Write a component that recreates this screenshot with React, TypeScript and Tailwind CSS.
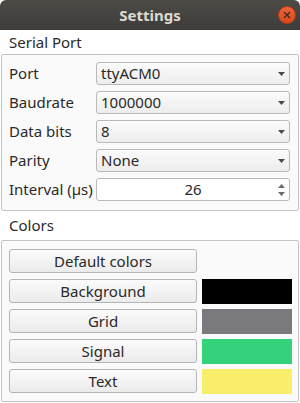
import React from "react";

const rows = [
  { label: "Port", value: "ttyACM0" },
  { label: "Baudrate", value: "1000000" },
  { label: "Data bits", value: "8" },
  { label: "Parity", value: "None" },
];

const colors = [
  { label: "Background", color: "bg-[#000000]" },
  { label: "Grid", color: "bg-[#7a797e]" },
  { label: "Signal", color: "bg-[#34d27a]" },
  { label: "Text", color: "bg-[#f9ee6c]" },
];

const Combo = ({ value }: { value: string }) => (
  <div className="w-[194px] h-[23px] rounded-[3px] border border-[#b9b9b9] bg-gradient-to-b from-[#fbfbfb] to-[#ededed] flex items-center pl-[4px] pr-[4px]">
    <span className="flex-1">{value}</span>
    <svg width="7" height="4" viewBox="0 0 7 4">
      <path d="M0 0 H7 L3.5 4 Z" fill="#4a4a4a" />
    </svg>
  </div>
);

const Button = ({ label }: { label: string }) => (
  <div className="w-[188px] h-[24px] shrink-0 rounded-[3px] border border-[#b4b4b4] bg-gradient-to-b from-[#fbfbfb] to-[#ebebeb] flex items-center justify-center">
    {label}
  </div>
);

export default function App() {
  return (
    <div className="w-[300px] h-[403px] bg-white flex flex-col text-[15px] text-[#2a2a2a] font-['Noto_Sans',sans-serif] overflow-hidden">
      {/* title bar */}
      <div className="h-[30px] shrink-0 rounded-t-[6px] bg-gradient-to-b from-[#4c4b46] to-[#3d3c38] flex items-center justify-center relative">
        <span className="font-bold text-[#dcd9d2] text-[15px]">Settings</span>
        <div className="absolute right-[4px] top-[6px] w-[18px] h-[18px] rounded-full bg-gradient-to-b from-[#f0653a] to-[#d9481a] border border-[#b83c14] flex items-center justify-center">
          <svg width="8" height="8" viewBox="0 0 8 8">
            <path d="M1 1 L7 7 M7 1 L1 7" stroke="#3c2a20" strokeWidth="1.4" />
          </svg>
        </div>
      </div>

      <div className="h-[24px] shrink-0 flex items-center pl-[9px]">Serial Port</div>

      <div className="ml-[1px] w-[298px] h-[157px] shrink-0 rounded-[2px] border border-[#c4c4c4] bg-[#fafafa] pl-[7px] pr-[8px] pt-[7px] flex flex-col gap-[6px]">
        {rows.map((r) => (
          <div key={r.label} className="flex items-center justify-between h-[23px]">
            <span>{r.label}</span>
            <Combo value={r.value} />
          </div>
        ))}
        <div className="flex items-center justify-between h-[23px]">
          <span>Interval (µs)</span>
          <div className="w-[194px] h-[23px] rounded-[3px] border border-[#b9b9b9] bg-white flex items-center">
            <span className="flex-1 text-center pl-[14px]">26</span>
            <div className="w-[14px] flex flex-col items-center gap-[4px] pr-[2px]">
              <svg width="7" height="4" viewBox="0 0 7 4">
                <path d="M0 4 H7 L3.5 0 Z" fill="#6a6a6a" />
              </svg>
              <svg width="7" height="4" viewBox="0 0 7 4">
                <path d="M0 0 H7 L3.5 4 Z" fill="#6a6a6a" />
              </svg>
            </div>
          </div>
        </div>
      </div>

      <div className="h-[29px] shrink-0 flex items-center pl-[9px]">Colors</div>

      <div className="ml-[1px] w-[298px] h-[162px] shrink-0 rounded-[2px] border border-[#c4c4c4] bg-[#fafafa] pl-[7px] pr-[6px] pt-[8px] flex flex-col gap-[6px]">
        <Button label="Default colors" />
        {colors.map((c) => (
          <div key={c.label} className="flex items-center gap-[5px] h-[24px]">
            <Button label={c.label} />
            <div className={`w-[91px] h-[25px] ${c.color}`} />
          </div>
        ))}
      </div>
    </div>
  );
}
